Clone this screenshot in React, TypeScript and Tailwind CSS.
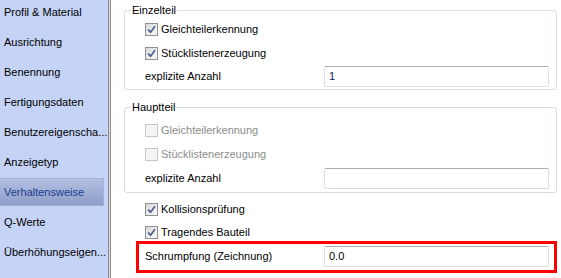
import React from "react";

const navItems = [
  "Profil & Material",
  "Ausrichtung",
  "Benennung",
  "Fertigungsdaten",
  "Benutzereigenscha...",
  "Anzeigetyp",
  "Verhaltensweise",
  "Q-Werte",
  "Überhöhungseigen...",
];

const Checkbox = ({ checked, disabled }: { checked?: boolean; disabled?: boolean }) => (
  <span
    className={
      disabled
        ? "w-[13px] h-[13px] shrink-0 border border-[#c6c6c6] bg-[#f4f4f4] flex items-center justify-center"
        : "w-[13px] h-[13px] shrink-0 border border-[#8e8f8f] bg-gradient-to-br from-[#d9d9d9] to-[#fafafa] flex items-center justify-center"
    }
  >
    {checked && (
      <svg width="9" height="9" viewBox="0 0 9 9">
        <path d="M1.2 4.6 L3.6 7.2 L7.9 1.3" stroke="#4a5f92" strokeWidth="1.7" fill="none" />
      </svg>
    )}
  </span>
);

const CheckRow = ({ label, checked, disabled }: { label: string; checked?: boolean; disabled?: boolean }) => (
  <div className="h-[24px] flex items-center gap-[3px]">
    <Checkbox checked={checked} disabled={disabled} />
    <span className={disabled ? "text-[#8c8c8c]" : "text-black"}>{label}</span>
  </div>
);

const TextBox = ({ value, navy }: { value?: string; navy?: boolean }) => (
  <div
    className={`h-[21px] w-[225px] rounded-[2px] border border-[#dbdfe6] border-t-[#abadb3] bg-white px-[4px] flex items-center ${
      navy ? "text-[#0a1a5c]" : "text-black"
    }`}
  >
    {value}
  </div>
);

const Group = ({ title, children }: { title: string; children: React.ReactNode }) => (
  <div className="relative border border-[#d5dfe5] rounded-[3px] pl-[20px] pr-[7px]">
    <span className="absolute -top-[8px] left-[6px] bg-white px-[1px] leading-[14px]">{title}</span>
    {children}
  </div>
);

export default function App() {
  return (
    <div
      className="flex w-[561px] h-[278px] overflow-hidden bg-white text-[11px] text-black"
      style={{ fontFamily: '"Liberation Sans", Arial, sans-serif' }}
    >
      <div className="w-[108px] shrink-0 bg-[#c5d3f6] flex flex-col -mt-[3px]">
        {navItems.map((item) => (
          <div key={item} className="h-[30px] shrink-0 flex items-center pr-[3px]">
            {item === "Verhaltensweise" ? (
              <div className="h-[28px] w-full flex items-center pl-[4px] bg-gradient-to-b from-[#b3c0e2] to-[#8d9dc8] border border-[#a4b1d4] text-[#1b3a8c] -ml-[1px]">
                {item}
              </div>
            ) : (
              <span className="pl-[4px] whitespace-nowrap">{item}</span>
            )}
          </div>
        ))}
      </div>
      <div className="w-[1px] shrink-0 bg-[#8a8a8a]" />
      <div className="w-[1px] shrink-0 bg-[#d9d9d9]" />
      <div className="w-[1px] shrink-0 bg-[#8f8f8f]" />
      <div className="w-[1px] shrink-0 bg-white" />

      <div className="flex-1 flex flex-col pl-[12px] pr-[4px] pt-[10px]">
        <Group title="Einzelteil">
          <div className="pt-[6px] pb-[2px]">
            <CheckRow label="Gleichteilerkennung" checked />
            <CheckRow label="Stücklistenerzeugung" checked />
            <div className="mt-[1px] flex items-center justify-between">
              <span>explizite Anzahl</span>
              <TextBox value="1" navy />
            </div>
          </div>
        </Group>

        <div className="mt-[17px]">
          <Group title="Hauptteil">
            <div className="pt-[10px] pb-[3px]">
              <CheckRow label="Gleichteilerkennung" disabled />
              <CheckRow label="Stücklistenerzeugung" disabled />
              <div className="mt-[2px] flex items-center justify-between">
                <span>explizite Anzahl</span>
                <TextBox />
              </div>
            </div>
          </Group>
        </div>

        <div className="pl-[21px] pr-[8px] pt-[5px]">
          <div className="h-[23px] flex items-center gap-[3px]">
            <Checkbox checked />
            <span>Kollisionsprüfung</span>
          </div>
          <div className="h-[23px] flex items-center gap-[3px]">
            <Checkbox checked />
            <span>Tragendes Bauteil</span>
          </div>
          <div className="relative mt-[2px] flex items-center justify-between">
            <span>Schrumpfung (Zeichnung)</span>
            <TextBox value="0.0" />
            <div className="absolute -left-[9px] -right-[8px] -top-[5px] -bottom-[6px] border-[3px] border-[#ff0000] pointer-events-none" />
          </div>
        </div>
      </div>
    </div>
  );
}
